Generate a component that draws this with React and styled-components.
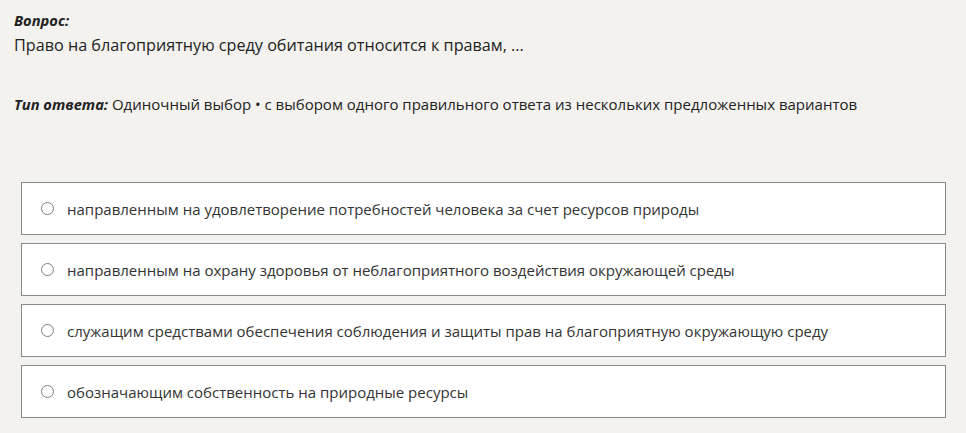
import React from 'react'
import styled, { createGlobalStyle } from 'styled-components'

const GlobalStyle = createGlobalStyle`
    html, body {
        margin: 0;
        padding: 0;
        background: #f3f2ef;
    }
    body {
        font-family: "Open Sans", "Noto Sans", sans-serif;
        color: #222;
    }
`

const options = [
    'направленным на удовлетворение потребностей человека за счет ресурсов природы',
    'направленным на охрану здоровья от неблагоприятного воздействия окружающей среды',
    'служащим средствами обеспечения соблюдения и защиты прав на благоприятную окружающую среду',
    'обозначающим собственность на природные ресурсы',
]

function App() {
    return (
        <Page>
            <GlobalStyle />
            <Question>
                <Label>Вопрос:</Label>
                <QuestionText>Право на благоприятную среду обитания относится к правам, ...</QuestionText>
            </Question>
            <AnswerType>
                <Label>Тип ответа:</Label> Одиночный выбор • с выбором одного правильного ответа из нескольких предложенных вариантов
            </AnswerType>
            <Options>
                {options.map((text) => (
                    <Option key={text}>
                        <Radio />
                        <OptionText>{text}</OptionText>
                    </Option>
                ))}
            </Options>
        </Page>
    )
}

export default App

const Page = styled.div`
    padding: 9px 20px 15px 14px;
`

const Question = styled.div`
    line-height: 22px;
`

const Label = styled.span`
    font-weight: 700;
    font-style: italic;
    font-size: 14.7px;
`

const QuestionText = styled.div`
    margin-top: 3px;
    font-size: 16.2px;
`

const AnswerType = styled.div`
    margin-top: 37px;
    font-size: 15px;
    line-height: 22px;
`

const Options = styled.div`
    margin-top: 67px;
    margin-left: 7px;
    display: flex;
    flex-direction: column;
    gap: 8px;
`

const Option = styled.label`
    display: flex;
    align-items: center;
    height: 51px;
    padding: 0 20px;
    background: #fff;
    border: 1px solid #8a8a8a;
`

const Radio = styled.span`
    box-sizing: border-box;
    width: 13px;
    height: 13px;
    border-radius: 50%;
    border: 1px solid #808080;
    flex-shrink: 0;
    margin-left: -1px;
`

const OptionText = styled.span`
    margin-left: 13px;
    font-size: 15px;
    color: #333;
`
